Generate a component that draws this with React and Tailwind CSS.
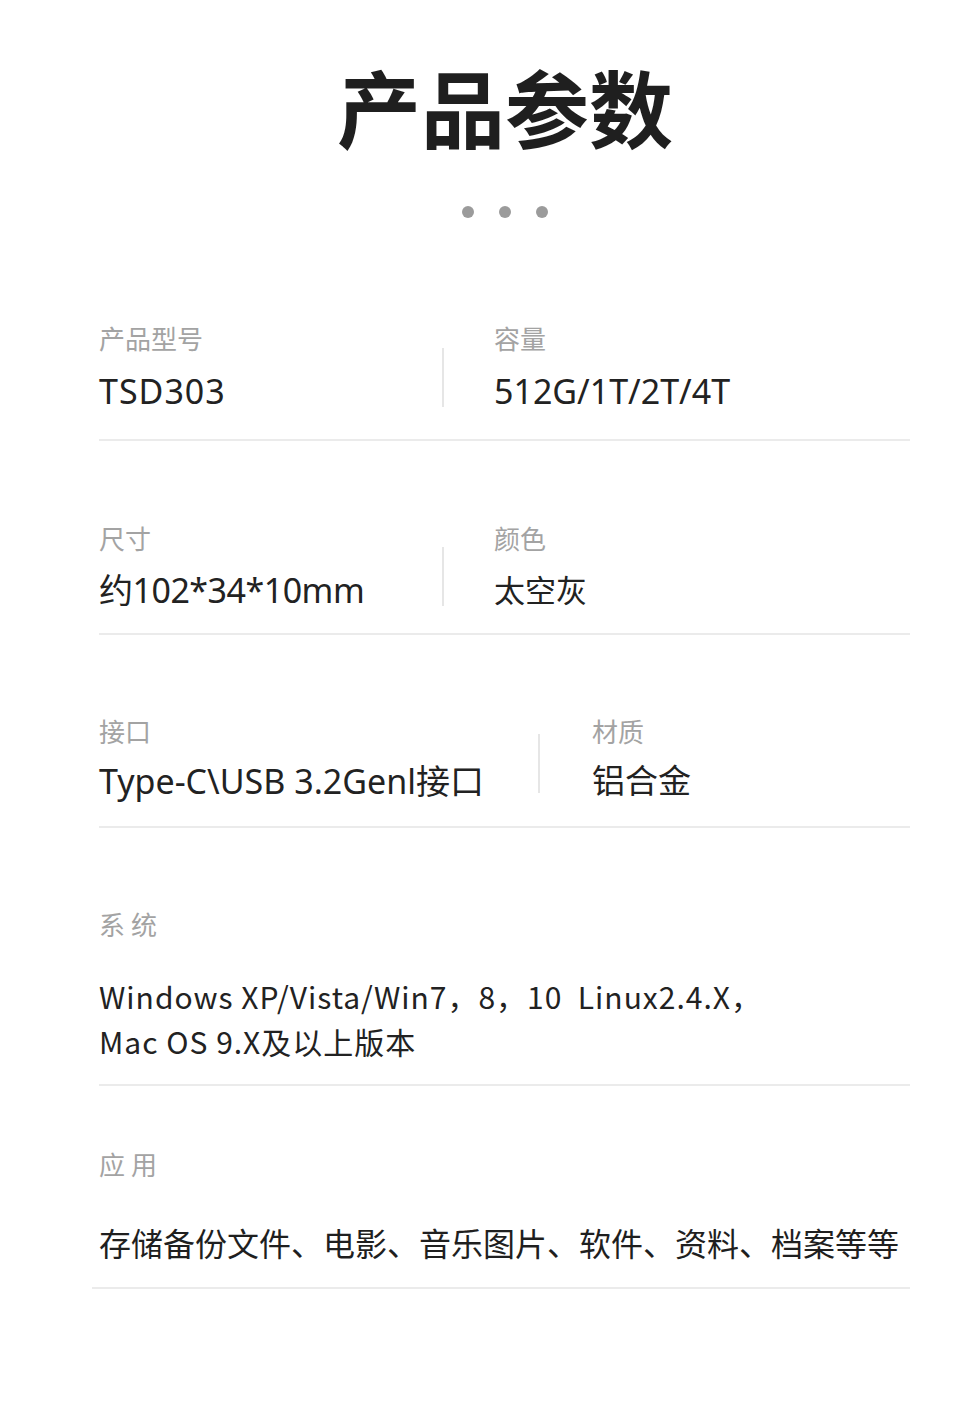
import React from "react";

const CJK = { fontFamily: '"Noto Sans", "Noto Sans CJK SC", sans-serif' };
const CJK2 = { fontFamily: '"Noto Sans CJK SC", sans-serif' };

function Label({ children, className = "" }) {
  return (
    <div className={"text-[26px] leading-[26px] text-[#a3a3a3] " + className} style={CJK2}>
      {children}
    </div>
  );
}

function Value({ children, className = "", size = "text-[34px]" }) {
  return (
    <div className={size + " leading-[36px] text-[#222222] whitespace-nowrap " + className} style={CJK}>
      {children}
    </div>
  );
}

function HLine({ className = "" }) {
  return <div className={"h-[2px] bg-[#ebebeb] " + className} />;
}

export default function App() {
  return (
    <div className="w-[962px] h-[1424px] bg-white overflow-hidden">
      <h1
        className="mt-[64px] pl-[48px] text-center text-[84px] leading-[84px] font-bold text-[#1f1f1f]"
        style={CJK2}
      >
        产品参数
      </h1>
      <div className="mt-[58px] pl-[48px] flex justify-center gap-[25px]">
        <span className="w-[12px] h-[12px] rounded-full bg-[#9b9b9b]" />
        <span className="w-[12px] h-[12px] rounded-full bg-[#9b9b9b]" />
        <span className="w-[12px] h-[12px] rounded-full bg-[#9b9b9b]" />
      </div>

      <div className="ml-[99px] w-[811px]">
        {/* Row 1 */}
        <div className="mt-[107px] flex">
          <div className="w-[343px]">
            <Label>产品型号</Label>
            <Value className="mt-[22px] tracking-[1px]">TSD303</Value>
          </div>
          <div className="w-[2px] h-[59px] self-end mb-[2px] bg-[#e6e6e6]" />
          <div className="pl-[50px]">
            <Label>容量</Label>
            <Value className="mt-[22px]">512G/1T/2T/4T</Value>
          </div>
        </div>
        <HLine className="mt-[30px]" />

        {/* Row 2 */}
        <div className="mt-[84px] flex">
          <div className="w-[343px]">
            <Label>尺寸</Label>
            <Value className="mt-[21px] tracking-[-0.5px]">约102*34*10mm</Value>
          </div>
          <div className="w-[2px] h-[59px] self-end mb-[2px] bg-[#e6e6e6]" />
          <div className="pl-[50px]">
            <Label>颜色</Label>
            <Value className="mt-[21px]" size="text-[31px]">太空灰</Value>
          </div>
        </div>
        <HLine className="mt-[25px]" />

        {/* Row 3 */}
        <div className="mt-[83px] flex">
          <div className="w-[439px]">
            <Label>接口</Label>
            <Value className="mt-[19px]">Type-C\USB 3.2Genl接口</Value>
          </div>
          <div className="w-[2px] h-[59px] self-end mb-[6px] bg-[#e6e6e6]" />
          <div className="pl-[52px]">
            <Label>材质</Label>
            <Value className="mt-[19px]" size="text-[33px]">铝合金</Value>
          </div>
        </div>
        <HLine className="mt-[27px]" />

        {/* Row 4 */}
        <Label className="mt-[83px] tracking-[6px]">系统</Label>
        <div
          className="mt-[37px] text-[30px] leading-[45px] tracking-[1px] text-[#222222] whitespace-nowrap"
          style={CJK2}
        >
          <div>Windows XP/Vista/Win7，8，10&nbsp;&nbsp;Linux2.4.X，</div>
          <div>Mac OS 9.X及以上版本</div>
        </div>
        <HLine className="mt-[20px]" />

        {/* Row 5 */}
        <Label className="mt-[65px] tracking-[6px]">应用</Label>
        <div
          className="mt-[49px] text-[32px] leading-[32px] text-[#1f1f1f] whitespace-nowrap"
          style={CJK2}
        >
          存储备份文件、电影、音乐图片、软件、资料、档案等等
        </div>
      </div>
      <HLine className="mt-[29px] ml-[92px] w-[818px]" />
    </div>
  );
}
